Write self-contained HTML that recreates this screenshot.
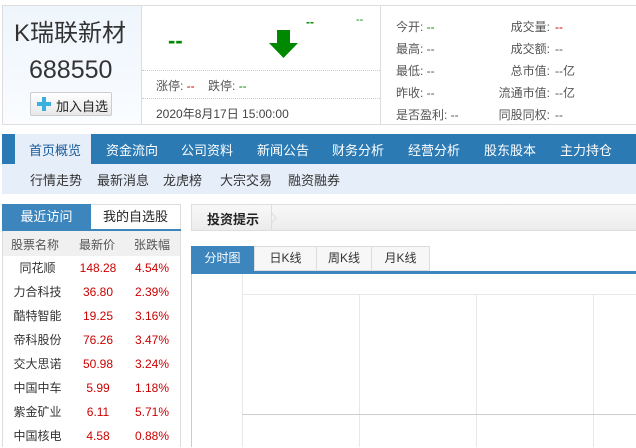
<!DOCTYPE html>
<html><head><meta charset="utf-8"><style>
*{margin:0;padding:0;box-sizing:border-box}
body{width:636px;height:447px;overflow:hidden;background:#fff;font-family:"Liberation Sans","Noto Sans CJK SC",sans-serif;font-size:12px;color:#333;position:relative}
.a{position:absolute;white-space:nowrap}
.g{color:#080}.r{color:#c00}
</style></head><body>
<div class="a" style="left:2px;top:5px;width:634px;height:120px;border:1px solid #ddd;border-right:none"></div>
<div class="a" style="left:3px;top:6px;width:138px;height:118px;background:linear-gradient(#eef5fc,#fafcff)"></div>
<div class="a" style="left:141px;top:6px;width:1px;height:118px;background:#ddd"></div>
<div class="a" style="left:380px;top:6px;width:1px;height:118px;background:#ddd"></div>
<div class="a" style="left:14px;top:13px;font-size:24px;color:#333">K瑞联新材</div>
<div class="a" style="left:29px;top:56px;font-size:25px;color:#333">688550</div>
<div class="a" style="left:30px;top:92px;width:82px;height:24px;border:1px solid #ccc;border-radius:2px;background:linear-gradient(#fff,#e8e8e8)"></div>
<div class="a" style="left:37px;top:97px;width:14px;height:14px">
<div class="a" style="left:5px;top:0;width:4px;height:14px;background:#3ab0e0"></div>
<div class="a" style="left:0;top:5px;width:14px;height:4px;background:#3ab0e0"></div></div>
<div class="a" style="left:56px;top:96px;font-size:13px;color:#222">加入自选</div>
<div class="a g" style="left:168px;top:28px;font-size:22px;font-weight:bold">--</div>
<svg class="a" style="left:269px;top:30px" width="30" height="28"><path d="M8 0H21V13H29L14.5 28L0 13H8Z" fill="#080"/></svg>
<div class="a g" style="left:306px;top:15px;font-size:12px;font-weight:bold">--</div>
<div class="a g" style="left:356px;top:14px;font-size:11px">--</div>
<div class="a" style="left:142px;top:70px;width:238px;border-top:1px dotted #ccc"></div>
<div class="a" style="left:142px;top:98px;width:238px;border-top:1px dotted #ccc"></div>
<div class="a" style="left:156px;top:77px;color:#555">涨停: <span class="r">--</span>&nbsp;&nbsp;&nbsp;&nbsp;跌停: <span class="g">--</span></div>
<div class="a" style="left:156px;top:105px;color:#444">2020年8月17日 15:00:00</div>
<div class="a" style="left:396px;top:16px;color:#555;line-height:22px">今开: <span class="g">--</span><br>最高: --<br>最低: --<br>昨收: --<br>是否盈利: --</div>
<div class="a" style="left:440px;top:16px;width:110px;text-align:right;color:#555;line-height:22px">成交量:<br>成交额:<br>总市值:<br>流通市值:<br>同股同权:</div>
<div class="a" style="left:555px;top:16px;color:#555;line-height:22px"><span class="r">--</span><br>--<br>--亿<br>--亿<br>--</div>
<div class="a" style="left:2px;top:134px;width:634px;height:30px;background:#2b7ab4"></div>
<div class="a" style="left:15px;top:134px;width:76px;height:30px;background:#e6eef9"></div>
<div class="a" style="left:0;top:140px;width:636px;font-size:13px;color:#fff">
<span class="a" style="left:29px;color:#1a5a99">首页概览</span><span class="a" style="left:106px">资金流向</span><span class="a" style="left:181px">公司资料</span><span class="a" style="left:257px">新闻公告</span><span class="a" style="left:332px">财务分析</span><span class="a" style="left:408px">经营分析</span><span class="a" style="left:484px">股东股本</span><span class="a" style="left:560px">主力持仓</span></div>
<div class="a" style="left:2px;top:164px;width:634px;height:30px;background:#e6eef9"></div>
<div class="a" style="left:0;top:170px;font-size:13px;color:#333">
<span class="a" style="left:30px">行情走势</span><span class="a" style="left:97px">最新消息</span><span class="a" style="left:163px">龙虎榜</span><span class="a" style="left:220px">大宗交易</span><span class="a" style="left:288px">融资融券</span></div>
<div class="a" style="left:2px;top:204px;width:179px;height:243px;border:1px solid #ddd;border-bottom:none"></div>
<div class="a" style="left:2px;top:204px;width:89px;height:27px;background:#3d86bd;color:#fff;font-size:13px;text-align:center;line-height:26px">最近访问</div>
<div class="a" style="left:91px;top:204px;width:89px;height:27px;color:#222;font-size:13px;text-align:center;line-height:26px">我的自选股</div>
<div class="a" style="left:2px;top:229px;width:179px;height:2px;background:#3d86bd"></div>
<div class="a" style="left:3px;top:231px;width:177px;height:25px;background:#f0f0f0"></div>
<div class="a" style="left:0;top:236px;font-size:12px;color:#555">
<span class="a" style="left:11px">股票名称</span><span class="a" style="left:79px">最新价</span><span class="a" style="left:134px">张跌幅</span></div>
<div class="a" style="left:0;top:256px;width:180px;font-size:12px;line-height:24px">
<div class="a" style="left:0;width:75px;text-align:center;color:#333">同花顺<br>力合科技<br>酷特智能<br>帝科股份<br>交大思诺<br>中国中车<br>紫金矿业<br>中国核电</div>
<div class="a r" style="left:68px;width:60px;text-align:center">148.28<br>36.80<br>19.25<br>76.26<br>50.98<br>5.99<br>6.11<br>4.58</div>
<div class="a r" style="left:124px;width:56px;text-align:center">4.54%<br>2.39%<br>3.16%<br>3.47%<br>3.24%<br>1.18%<br>5.71%<br>0.88%</div></div>
<div class="a" style="left:191px;top:204px;width:445px;height:27px;border:1px solid #ddd;border-right:none;background:linear-gradient(#f8f8f8,#ececec)"></div>
<div class="a" style="left:271px;top:205px;width:1px;height:25px;background:#ddd"></div>
<svg class="a" style="left:271px;top:212px" width="6" height="12"><path d="M0 0L5 6L0 12" fill="none" stroke="#ddd"/></svg>
<div class="a" style="left:207px;top:209px;font-size:13px;font-weight:bold;color:#222">投资提示</div>
<div class="a" style="left:191px;top:246px;width:63px;height:26px;background:#3d86bd;color:#fff;text-align:center;line-height:25px">分时图</div>
<div class="a" style="left:254px;top:246px;width:63px;height:25px;border:1px solid #ddd;background:#f7f7f7;text-align:center;line-height:23px">日K线</div>
<div class="a" style="left:316px;top:246px;width:56px;height:25px;border:1px solid #ddd;background:#f7f7f7;text-align:center;line-height:23px">周K线</div>
<div class="a" style="left:371px;top:246px;width:59px;height:25px;border:1px solid #ddd;background:#f7f7f7;text-align:center;line-height:23px">月K线</div>
<div class="a" style="left:191px;top:271px;width:445px;height:3px;background:#3d86bd"></div>
<div class="a" style="left:191px;top:274px;width:1px;height:173px;background:#ccc"></div>
<div class="a" style="left:242px;top:274px;width:1px;height:173px;background:#e8e8e8"></div>
<div class="a" style="left:242px;top:294px;width:394px;height:1px;background:#e8e8e8"></div>
<div class="a" style="left:359px;top:294px;width:1px;height:153px;background:#e8e8e8"></div>
<div class="a" style="left:476px;top:294px;width:1px;height:153px;background:#e8e8e8"></div>
<div class="a" style="left:593px;top:294px;width:1px;height:153px;background:#e8e8e8"></div>
<div class="a" style="left:242px;top:414px;width:394px;height:1px;background:#ccc"></div>
</body></html>
